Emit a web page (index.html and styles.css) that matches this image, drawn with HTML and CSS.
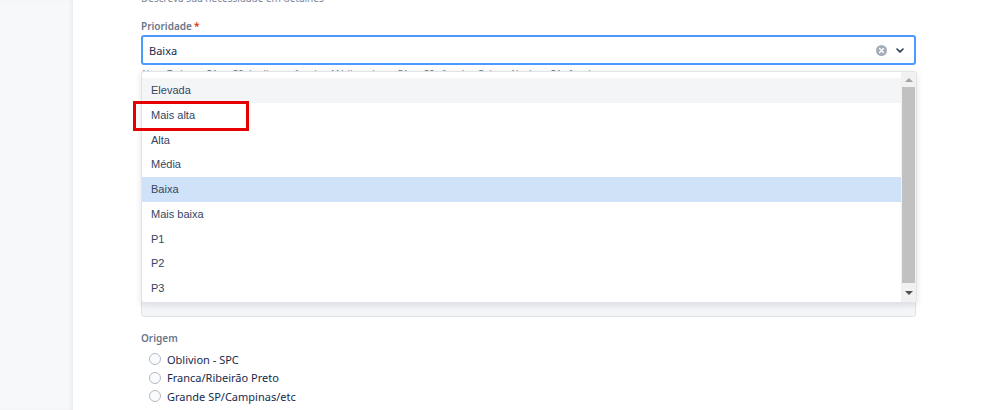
FILE: index.html
```html
<!DOCTYPE html>
<html lang="pt">
  <head>
    <meta charset="UTF-8" />
    <meta name="viewport" content="width=device-width, initial-scale=1.0" />
    <title>Prioridade</title>
    <link rel="stylesheet" href="styles.css">
  </head>

  <body>
    <aside class="lateral"></aside>
    <main class="formulario">
      <p class="descricao">Descreva sua necessidade em detalhes</p>

      <div class="campo">
        <label class="rotulo">Prioridade<span class="obrigatorio">*</span></label>
        <div class="seletor">
          <span class="valor">Baixa</span>
          <span class="limpar">
            <svg width="11" height="11" viewBox="0 0 11 11">
              <circle cx="5.5" cy="5.5" r="5.5" fill="#a5adba" />
              <path d="M3.6 3.6 L7.4 7.4 M7.4 3.6 L3.6 7.4" stroke="#fff" stroke-width="1.4" stroke-linecap="round" />
            </svg>
          </span>
          <span class="seta">
            <svg width="8" height="5" viewBox="0 0 8 5">
              <path d="M1 1 L4 3.8 L7 1" fill="none" stroke="#253858" stroke-width="1.6" stroke-linecap="round" stroke-linejoin="round" />
            </svg>
          </span>
        </div>
        <p class="ajuda">Alta = Todos os P1 ou P2 do cliente afetados; Média = alguns P1 ou P2 afetados; Baixa = Nenhum P1 afetado</p>
        <div class="caixa-fundo"></div>

        <div class="lista">
          <ul class="opcoes">
            <li class="foco">Elevada</li>
            <li>Mais alta</li>
            <li>Alta</li>
            <li>Média</li>
            <li class="selecionada">Baixa</li>
            <li>Mais baixa</li>
            <li>P1</li>
            <li>P2</li>
            <li>P3</li>
          </ul>
          <div class="rolagem">
            <span class="seta-cima"></span>
            <span class="polegar"></span>
            <span class="seta-baixo"></span>
          </div>
        </div>

        <div class="marca"></div>
      </div>

      <div class="campo-origem">
        <label class="rotulo">Origem</label>
        <div class="radios">
          <label class="radio"><span class="bolinha"></span>Oblivion - SPC</label>
          <label class="radio"><span class="bolinha"></span>Franca/Ribeirão Preto</label>
          <label class="radio"><span class="bolinha"></span>Grande SP/Campinas/etc</label>
        </div>
      </div>
    </main>
  </body>
</html>
```

FILE: styles.css
```css
* {
  box-sizing: border-box;
}

body {
  margin: 0;
  display: flex;
  height: 410px;
  overflow: hidden;
  background-color: #fff;
  font-family: "Noto Sans", "Open Sans", sans-serif;
}

.lateral {
  width: 73px;
  flex-shrink: 0;
  background-color: #f7f8f9;
  box-shadow: inset -3px 0 4px -2px #e4e6ea;
}

.formulario {
  flex: 1;
  padding: 0 82px 0 68px;
}

.descricao {
  margin: -8px 0 0;
  height: 12px;
  font-size: 10px;
  line-height: 12px;
  color: #7a869a;
}

.campo {
  position: relative;
  margin-top: 16px;
}

.rotulo {
  display: block;
  height: 15px;
  font-size: 10px;
  font-weight: 600;
  line-height: 12px;
  color: #6b778c;
}

.obrigatorio {
  color: #de350b;
  margin-left: 2px;
}

.seletor {
  display: flex;
  align-items: center;
  height: 30px;
  border: 2px solid #4c9aff;
  border-radius: 3px;
  padding: 0 10px 0 6px;
  font-size: 11px;
  color: #172b4d;
}

.valor {
  flex: 1;
}

.limpar {
  display: flex;
  margin-right: 9px;
}

.seta {
  display: flex;
}

.ajuda {
  margin: 3px 0 0;
  height: 12px;
  font-size: 9px;
  line-height: 12px;
  color: #6b778c;
  white-space: nowrap;
  overflow: hidden;
}

.caixa-fundo {
  height: 234px;
  margin-top: 3px;
  border: 1px solid #dfe1e6;
  border-radius: 3px;
  background-color: #f4f5f7;
}

.lista {
  position: absolute;
  top: 51px;
  left: 0;
  right: -1px;
  height: 232px;
  display: flex;
  background-color: #fff;
  border: 1px solid #e1e3e6;
  border-radius: 3px;
  box-shadow: 0 2px 6px rgba(9, 30, 66, 0.12);
}

.opcoes {
  flex: 1;
  list-style: none;
  margin: 0;
  padding: 6px 0 0;
  font-family: "Liberation Sans", Arial, sans-serif;
  font-size: 11px;
  color: #344563;
}

.opcoes li {
  height: 24.75px;
  line-height: 24.75px;
  padding-left: 9px;
}

.opcoes .foco {
  background-color: #f4f5f7;
}

.opcoes .selecionada {
  background-color: #cfe2f7;
}

.rolagem {
  width: 15px;
  display: flex;
  flex-direction: column;
  align-items: center;
  background-color: #f1f1f1;
}

.seta-cima {
  margin-top: 6px;
  border-left: 4px solid transparent;
  border-right: 4px solid transparent;
  border-bottom: 4px solid #a3a3a3;
}

.polegar {
  width: 13px;
  height: 196px;
  margin-top: 5px;
  background-color: #c1c1c1;
}

.seta-baixo {
  margin-top: 8px;
  border-left: 4px solid transparent;
  border-right: 4px solid transparent;
  border-top: 4px solid #505050;
}

.marca {
  position: absolute;
  top: 81px;
  left: -8px;
  width: 116px;
  height: 30px;
  border: 3px solid #e60000;
}

.campo-origem {
  margin-top: 15px;
}

.campo-origem .rotulo {
  height: 16px;
}

.radios {
  display: flex;
  flex-direction: column;
  padding: 2px 0 0 8px;
}

.radio {
  display: flex;
  align-items: center;
  height: 18.5px;
  font-size: 11px;
  color: #172b4d;
}

.bolinha {
  width: 12px;
  height: 12px;
  border: 1px solid #b3bac5;
  border-radius: 50%;
  margin-right: 6px;
  background-color: #fafbfc;
}
```
